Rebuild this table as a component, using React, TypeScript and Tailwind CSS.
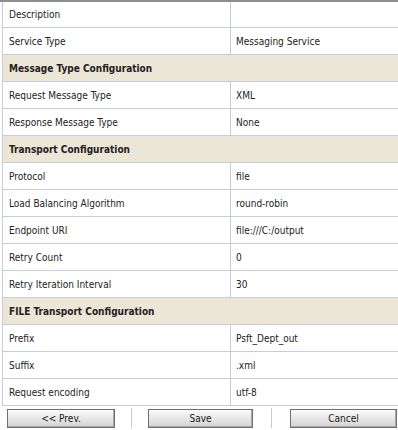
import React from "react";

type Row = { label: string; value?: string; header?: boolean };

const rows: Row[] = [
  { label: "Description", value: "" },
  { label: "Service Type", value: "Messaging Service" },
  { label: "Message Type Configuration", header: true },
  { label: "Request Message Type", value: "XML" },
  { label: "Response Message Type", value: "None" },
  { label: "Transport Configuration", header: true },
  { label: "Protocol", value: "file" },
  { label: "Load Balancing Algorithm", value: "round-robin" },
  { label: "Endpoint URI", value: "file:///C:/output" },
  { label: "Retry Count", value: "0" },
  { label: "Retry Iteration Interval", value: "30" },
  { label: "FILE Transport Configuration", header: true },
  { label: "Prefix", value: "Psft_Dept_out" },
  { label: "Suffix", value: ".xml" },
  { label: "Request encoding", value: "utf-8" },
];

function Btn({ label, w }: { label: string; w: string }) {
  return (
    <div
      className={`${w} h-[19px] flex items-center justify-center border border-[#6f6f6f] bg-gradient-to-b from-[#fbfbfb] to-[#d3d3d3] text-[10px] text-[#1a1a1a] shadow-[inset_-1px_-1px_0_#a8a8a8]`}
    >
      {label}
    </div>
  );
}

export default function App() {
  return (
    <div
      className="w-[398px] h-[430px] bg-white overflow-hidden text-[#222]"
      style={{ fontFamily: "'DejaVu Sans Condensed', 'DejaVu Sans', Tahoma, sans-serif", fontStretch: "condensed" }}
    >
      <div className="h-[2px] bg-[#8e8e8e]" />
      <div className="ml-[2px] border-l border-[#c5cbd8]">
        {rows.map((r, i) =>
          r.header ? (
            <div
              key={i}
              className="h-[27px] flex items-center pl-[6px] bg-[#ece6d7] border-b border-[#c5cbd8] font-bold text-[10px]"
            >
              {r.label}
            </div>
          ) : (
            <div
              key={i}
              className={`${i === 0 ? "h-[26px]" : "h-[27px]"} flex border-b border-[#c5cbd8] text-[10px]`}
            >
              <div className="w-[228px] flex items-center pl-[6px] border-r border-[#c5cbd8]">
                {r.label}
              </div>
              <div className="flex-1 flex items-center pl-[5px]">{r.value}</div>
            </div>
          )
        )}
      </div>
      <div className="flex items-center h-[22px] mt-[1px] pl-[7px]">
        <Btn label="<< Prev." w="w-[108px]" />
        <div className="w-[33px] flex justify-center">
          <div className="w-px h-[20px] bg-[#c5cbd8]" />
        </div>
        <Btn label="Save" w="w-[105px]" />
        <div className="w-[37px] flex justify-center">
          <div className="w-px h-[20px] bg-[#c5cbd8]" />
        </div>
        <Btn label="Cancel" w="w-[107px]" />
      </div>
    </div>
  );
}
